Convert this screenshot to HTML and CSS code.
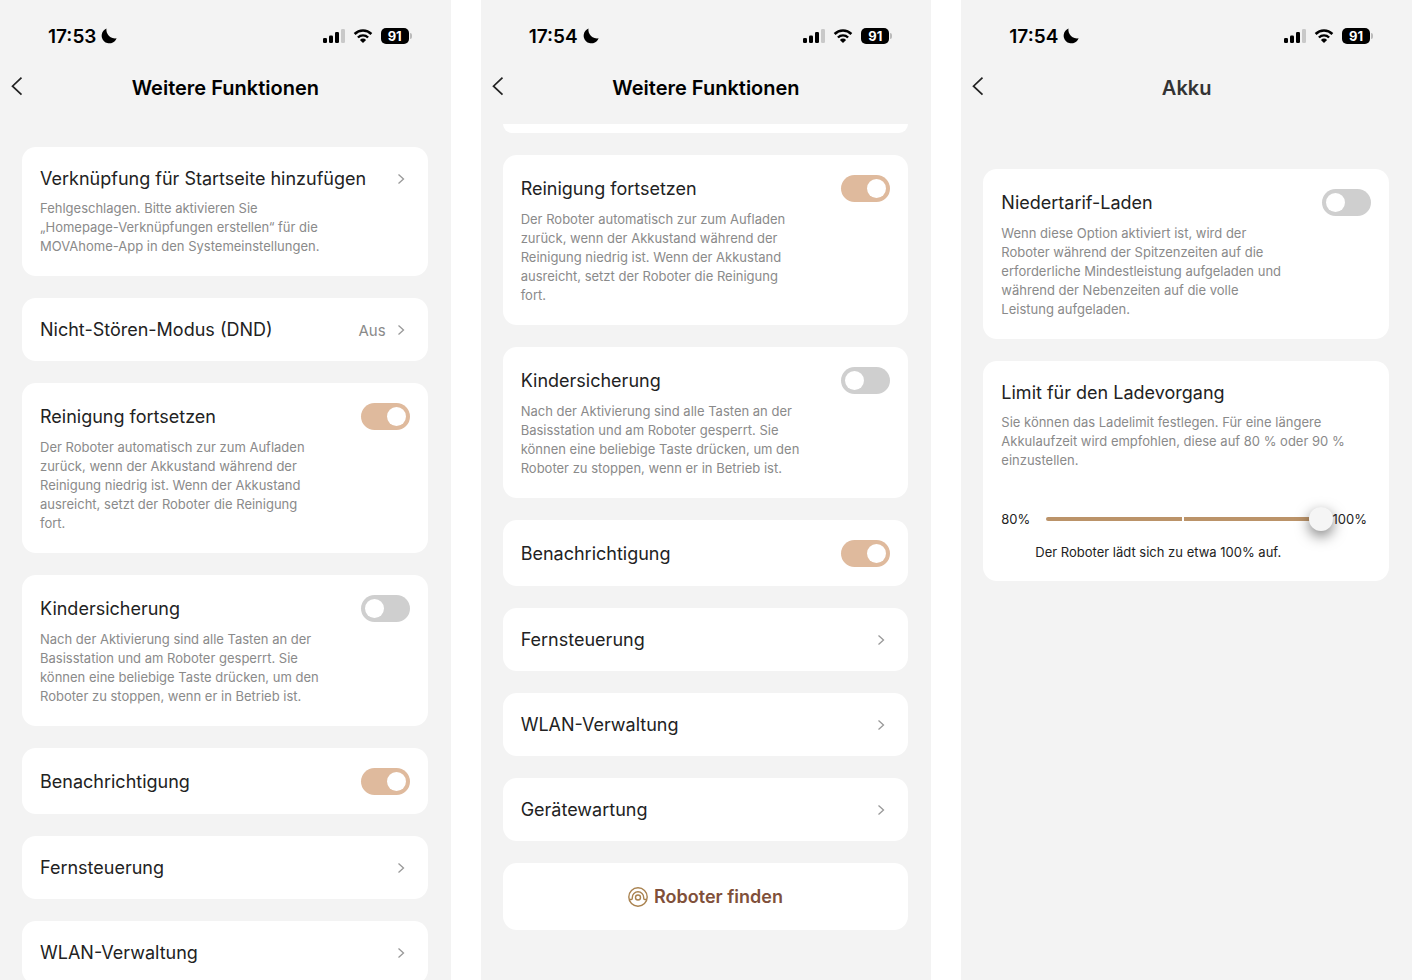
FILE: index.html
```
<!DOCTYPE html>
<html lang="de">

<head>
    <meta charset="UTF-8">
    <meta name="viewport" content="width=device-width, initial-scale=1.0">
    <title>Weitere Funktionen</title>
    <link rel="stylesheet" href="styles.css">
</head>

<body>
    <!-- shared icons -->
    <svg class="sprite" aria-hidden="true">
        <symbol id="moon" viewBox="0 0 16 16">
            <path d="M5.500 0.500A7.700 7.700 0 1 0 15.600 10.300A8.600 8.600 0 0 1 5.500 0.500Z" fill="#000" />
        </symbol>
        <symbol id="signal" viewBox="0 0 22 14">
            <rect x="0" y="9" width="4" height="5" rx="1.2" fill="#000" />
            <rect x="6" y="6.500" width="4" height="7.500" rx="1.2" fill="#000" />
            <rect x="12" y="3" width="4" height="11" rx="1.2" fill="#000" />
            <rect x="18" y="0" width="4" height="14" rx="1.2" fill="#c9c9c9" />
        </symbol>
        <symbol id="wifi" viewBox="0 0 20 14">
            <path d="M1.600 5A12 12 0 0 1 18.400 5" fill="none" stroke="#000" stroke-width="2.500" />
            <path d="M4.900 8.500A7.300 7.300 0 0 1 15.100 8.500" fill="none" stroke="#000" stroke-width="2.400" />
            <path d="M10 14L6.900 10.900A4.400 4.400 0 0 1 13.100 10.900Z" fill="#000" />
        </symbol>
        <symbol id="back" viewBox="0 0 12 22">
            <path d="M10.500 0.700L1.500 9.200L10.500 17.700" fill="none" stroke="#222" stroke-width="1.700" />
        </symbol>
        <symbol id="chevron" viewBox="0 0 8 12">
            <path d="M1.500 1.500L6.500 6L1.500 10.500" fill="none" stroke="#999" stroke-width="1.300" />
        </symbol>
    </svg>

    <main class="screens">
        <section class="phone">
            <div class="statusbar">
                <span class="time">17:53</span>
                <svg class="moon"><use href="#moon" /></svg>
                <svg class="signal"><use href="#signal" /></svg>
                <svg class="wifi"><use href="#wifi" /></svg>
                <span class="battery">91</span>
            </div>
            <header class="navbar">
                <button class="back" aria-label="Zurück"><svg><use href="#back" /></svg></button>
                <h1>Weitere Funktionen</h1>
            </header>
            <div class="list">
                <div class="card">
                    <div class="row">
                        <a class="title" href="#">Verknüpfung für Startseite hinzufügen</a>
                        <svg class="chevron"><use href="#chevron" /></svg>
                    </div>
                    <p class="desc">Fehlgeschlagen. Bitte aktivieren Sie „Homepage-Verknüpfungen erstellen“ für die MOVAhome-App in den Systemeinstellungen.</p>
                </div>
                <div class="card">
                    <div class="row">
                        <a class="title" href="#">Nicht-Stören-Modus (DND)</a>
                        <span class="value">Aus</span>
                        <svg class="chevron"><use href="#chevron" /></svg>
                    </div>
                </div>
                <div class="card">
                    <div class="row">
                        <label class="title" for="resume-1">Reinigung fortsetzen</label>
                        <input class="switch" type="checkbox" id="resume-1" checked>
                    </div>
                    <p class="desc">Der Roboter automatisch zur zum Aufladen zurück, wenn der Akkustand während der Reinigung niedrig ist. Wenn der Akkustand ausreicht, setzt der Roboter die Reinigung fort.</p>
                </div>
                <div class="card">
                    <div class="row">
                        <label class="title" for="child-1">Kindersicherung</label>
                        <input class="switch" type="checkbox" id="child-1">
                    </div>
                    <p class="desc">Nach der Aktivierung sind alle Tasten an der Basisstation und am Roboter gesperrt. Sie können eine beliebige Taste drücken, um den Roboter zu stoppen, wenn er in Betrieb ist.</p>
                </div>
                <div class="card">
                    <div class="row">
                        <label class="title" for="notify-1">Benachrichtigung</label>
                        <input class="switch" type="checkbox" id="notify-1" checked>
                    </div>
                </div>
                <div class="card">
                    <div class="row">
                        <a class="title" href="#">Fernsteuerung</a>
                        <svg class="chevron"><use href="#chevron" /></svg>
                    </div>
                </div>
                <div class="card">
                    <div class="row">
                        <a class="title" href="#">WLAN-Verwaltung</a>
                        <svg class="chevron"><use href="#chevron" /></svg>
                    </div>
                </div>
            </div>
        </section>

        <section class="phone">
            <div class="statusbar">
                <span class="time">17:54</span>
                <svg class="moon"><use href="#moon" /></svg>
                <svg class="signal"><use href="#signal" /></svg>
                <svg class="wifi"><use href="#wifi" /></svg>
                <span class="battery">91</span>
            </div>
            <header class="navbar">
                <button class="back" aria-label="Zurück"><svg><use href="#back" /></svg></button>
                <h1>Weitere Funktionen</h1>
            </header>
            <div class="list scrolled">
                <!-- end of the card that is scrolled under the header -->
                <div class="card-end"></div>
                <div class="card">
                    <div class="row">
                        <label class="title" for="resume-2">Reinigung fortsetzen</label>
                        <input class="switch" type="checkbox" id="resume-2" checked>
                    </div>
                    <p class="desc">Der Roboter automatisch zur zum Aufladen zurück, wenn der Akkustand während der Reinigung niedrig ist. Wenn der Akkustand ausreicht, setzt der Roboter die Reinigung fort.</p>
                </div>
                <div class="card">
                    <div class="row">
                        <label class="title" for="child-2">Kindersicherung</label>
                        <input class="switch" type="checkbox" id="child-2">
                    </div>
                    <p class="desc">Nach der Aktivierung sind alle Tasten an der Basisstation und am Roboter gesperrt. Sie können eine beliebige Taste drücken, um den Roboter zu stoppen, wenn er in Betrieb ist.</p>
                </div>
                <div class="card">
                    <div class="row">
                        <label class="title" for="notify-2">Benachrichtigung</label>
                        <input class="switch" type="checkbox" id="notify-2" checked>
                    </div>
                </div>
                <div class="card">
                    <div class="row">
                        <a class="title" href="#">Fernsteuerung</a>
                        <svg class="chevron"><use href="#chevron" /></svg>
                    </div>
                </div>
                <div class="card">
                    <div class="row">
                        <a class="title" href="#">WLAN-Verwaltung</a>
                        <svg class="chevron"><use href="#chevron" /></svg>
                    </div>
                </div>
                <div class="card">
                    <div class="row">
                        <a class="title" href="#">Gerätewartung</a>
                        <svg class="chevron"><use href="#chevron" /></svg>
                    </div>
                </div>
                <button class="find">
                    <svg viewBox="0 0 20 20" fill="none" stroke="#a9824f" stroke-width="1.400">
                        <circle cx="10" cy="10" r="9.200" />
                        <circle cx="10" cy="10.500" r="2.500" />
                        <path d="M1.500 12.500H3.200C4 12.500 4.300 12 4.300 11.200V10.500A5.700 5.700 0 0 1 15.700 10.500V11.200C15.700 12 16 12.500 16.800 12.500H18.500" />
                    </svg>
                    Roboter finden
                </button>
            </div>
        </section>

        <section class="phone">
            <div class="statusbar">
                <span class="time">17:54</span>
                <svg class="moon"><use href="#moon" /></svg>
                <svg class="signal"><use href="#signal" /></svg>
                <svg class="wifi"><use href="#wifi" /></svg>
                <span class="battery">91</span>
            </div>
            <header class="navbar">
                <button class="back" aria-label="Zurück"><svg><use href="#back" /></svg></button>
                <h1 class="soft">Akku</h1>
            </header>
            <div class="list akku">
                <div class="card">
                    <div class="row">
                        <label class="title" for="lowrate">Niedertarif-Laden</label>
                        <input class="switch" type="checkbox" id="lowrate">
                    </div>
                    <p class="desc">Wenn diese Option aktiviert ist, wird der Roboter während der Spitzenzeiten auf die erforderliche Mindestleistung aufgeladen und während der Nebenzeiten auf die volle Leistung aufgeladen.</p>
                </div>
                <div class="card">
                    <div class="row">
                        <label class="title" for="limit">Limit für den Ladevorgang</label>
                    </div>
                    <p class="desc wide">Sie können das Ladelimit festlegen. Für eine längere Akkulaufzeit wird empfohlen, diese auf 80 % oder 90 % einzustellen.</p>
                    <div class="slider">
                        <span>80%</span>
                        <input type="range" id="limit" min="80" max="100" step="10" value="100">
                        <span>100%</span>
                    </div>
                    <p class="status">Der Roboter lädt sich zu etwa 100% auf.</p>
                </div>
            </div>
        </section>
    </main>
</body>

</html>
```
FILE: styles.css
```
* {
    margin: 0;
    padding: 0;
    box-sizing: border-box;
}

body {
    background: #fff;
    font-family: Inter, "Liberation Sans", sans-serif;
    color: #222;
}

button {
    font-family: inherit;
    border: 0;
    cursor: pointer;
}

a {
    color: inherit;
    text-decoration: none;
}

.sprite {
    display: none;
}

.screens {
    display: grid;
    grid-template-columns: repeat(3, 1fr);
    gap: 30px;
    height: 100vh;
    overflow: hidden;
}

.phone {
    background: #f3f3f3;
    min-width: 0;
    overflow: hidden;
}

/* status bar */
.statusbar {
    display: flex;
    align-items: center;
    height: 72px;
    padding: 0 42px 0 48px;
}

.time {
    font-size: 19px;
    font-weight: 600;
    color: #000;
}

.moon {
    width: 16px;
    height: 16px;
    margin-left: 5px;
}

.signal {
    width: 22px;
    height: 14px;
    margin-left: auto;
}

.wifi {
    width: 20px;
    height: 14px;
    margin: 0 8px;
}

.battery {
    position: relative;
    width: 28px;
    height: 16px;
    border-radius: 5px;
    background: #000;
    color: #fff;
    font-size: 13px;
    font-weight: 700;
    line-height: 16px;
    text-align: center;
}

.battery::after {
    content: "";
    position: absolute;
    left: 29px;
    top: 5px;
    width: 2px;
    height: 6px;
    border-radius: 0 2px 2px 0;
    background: #bbb;
}

/* title bar */
.navbar {
    display: grid;
    grid-template-columns: 48px 1fr 48px;
    align-items: center;
    height: 52px;
    padding-bottom: 20px;
}

.back {
    background: none;
    height: 32px;
    padding-left: 11px;
    text-align: left;
}

.back svg {
    display: block;
    width: 12px;
    height: 22px;
}

.navbar h1 {
    font-size: 20px;
    font-weight: 600;
    line-height: 32px;
    text-align: center;
    color: #000;
}

.navbar .soft {
    color: #333;
}

/* cards */
.list {
    display: flex;
    flex-direction: column;
    gap: 22px;
    padding: 23px 23px 0 22px;
}

.list.scrolled {
    padding-top: 0;
}

.list.akku {
    padding-top: 45px;
}

.card {
    background: #fff;
    border-radius: 14px;
    padding: 20px 18px 19px;
}

.card-end {
    background: #fff;
    height: 9px;
    border-radius: 0 0 14px 14px;
}

.row {
    display: flex;
    align-items: center;
}

.title {
    flex: 1;
    font-size: 18px;
    font-weight: 400;
    line-height: 24px;
}

.value {
    font-size: 15px;
    color: #8a8a8a;
    margin-right: 11px;
}

.chevron {
    width: 8px;
    height: 12px;
    margin-right: 5px;
}

.desc {
    max-width: 284px;
    margin: 8px 0 1px;
    font-size: 13px;
    line-height: 19px;
    color: #8a8a8a;
}

.desc.wide {
    max-width: none;
}

.switch {
    appearance: none;
    width: 49px;
    height: 27px;
    padding: 4px;
    border-radius: 14px;
    background: #cfcfcf;
    cursor: pointer;
}

.switch::before {
    content: "";
    display: block;
    width: 19px;
    height: 19px;
    border-radius: 50%;
    background: #fff;
}

.switch:checked {
    background: #dfba9d;
}

.switch:checked::before {
    margin-left: auto;
}

.find {
    display: flex;
    align-items: center;
    justify-content: center;
    gap: 6px;
    height: 67px;
    border-radius: 14px;
    background: #fff;
    color: #80503a;
    font-size: 18px;
    font-weight: 600;
}

.find svg {
    width: 20px;
    height: 20px;
}

/* charge limit */
.slider {
    display: flex;
    align-items: center;
    margin-top: 37px;
    padding-right: 4px;
    font-size: 13px;
    line-height: 24px;
}

.slider input {
    appearance: none;
    flex: 1;
    min-width: 0;
    height: 24px;
    margin-left: 16px;
    background: none;
}

.slider input::-webkit-slider-runnable-track {
    height: 4px;
    border-radius: 2px;
    background: linear-gradient(90deg, #bb9369 0 calc(50% - 7px), #fff calc(50% - 7px) calc(50% - 5px), #bb9369 calc(50% - 5px));
}

.slider input::-webkit-slider-thumb {
    appearance: none;
    width: 24px;
    height: 24px;
    margin-top: -10px;
    border-radius: 50%;
    background: #f5f5f5;
    box-shadow: 0 5px 14px rgba(0, 0, 0, 0.5);
}

.status {
    margin-top: 12px;
    padding-left: 34px;
    font-size: 13px;
    line-height: 19px;
}
```
